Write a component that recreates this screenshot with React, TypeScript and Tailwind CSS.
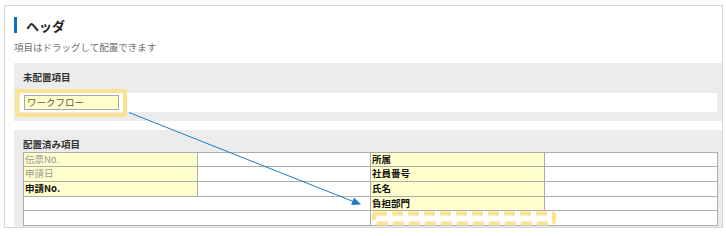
import React from 'react';

const font = { fontFamily: '"Noto Sans CJK JP", "Noto Sans", sans-serif' };

type Cell = {
  text?: string;
  span?: number;
  yellow?: boolean;
  muted?: boolean;
};

const rows: Cell[][] = [
  [
    { text: '伝票No.', yellow: true, muted: true },
    {},
    { text: '所属', yellow: true },
    {},
  ],
  [
    { text: '申請日', yellow: true, muted: true },
    {},
    { text: '社員番号', yellow: true },
    {},
  ],
  [
    { text: '申請No.', yellow: true },
    {},
    { text: '氏名', yellow: true },
    {},
  ],
  [{ span: 2 }, { text: '負担部門', yellow: true }, {}],
  [{ span: 2 }, { span: 2 }],
];

const LayoutTable = () => (
  <div className="ml-[9px] grid w-[695px] grid-cols-[174px_173px_174px_173px] grid-rows-[14px_15px_15px_14px_15px] border-l border-t border-[#adadad]">
    {rows.map((row, r) =>
      row.map((cell, c) => (
        <div
          key={`${r}-${c}`}
          className={`flex items-center border-b border-r border-[#adadad] pl-px text-[9.5px] leading-none ${
            cell.span === 2 ? 'col-span-2' : ''
          } ${cell.yellow ? 'bg-[#ffffcc]' : 'bg-white'} ${
            cell.muted ? 'text-[#9a9a9a]' : 'font-bold text-[#111]'
          }`}
        >
          {cell.text}
        </div>
      )),
    )}
  </div>
);

const App = () => {
  return (
    <div className="relative h-[236px] w-[726px] bg-white" style={font}>
      <div className="pl-[4px] pt-[5px]">
        <div className="h-[223px] w-[719px] overflow-hidden border border-[#d6d6d6] bg-white pl-[9px]">
          <div className="mt-[11px] flex h-[16px] items-center">
            <div className="h-[16px] w-[3px] bg-[#0b72c2]" />
            <span className="ml-[9px] text-[13px] font-bold leading-none text-[#222]">
              ヘッダ
            </span>
          </div>
          <p className="mt-[8px] h-[12px] text-[9.5px] leading-[12px] text-[#6f6f6f]">
            項目はドラッグして配置できます
          </p>

          <div className="mt-[10px] bg-[#ececec] pb-[9px] pl-[6px] pr-[5px] pt-[8px]">
            <p className="ml-[3px] h-[12px] text-[9.5px] font-bold leading-[12px] text-[#333]">
              未配置項目
            </p>
            <div className="relative mt-[10px] flex h-[19px] items-center bg-white pl-[4px]">
              <div className="absolute left-[-5px] top-[-4px] h-[28px] w-[112px] rounded-[3px] border-4 border-[#fde290]" />
              <div className="relative flex h-[15px] w-[95px] items-center border border-[#a8a8a8] bg-[#ffffcc] pl-[2px] text-[9.5px] leading-none text-[#555]">
                ワークフロー
              </div>
            </div>
          </div>

          <div className="mt-[9px] bg-[#ececec] pb-[2px] pt-[8px]">
            <p className="ml-[9px] h-[12px] text-[9.5px] font-bold leading-[12px] text-[#333]">
              配置済み項目
            </p>
            <div className="mt-[2px]">
              <LayoutTable />
            </div>
          </div>
        </div>
      </div>

      <svg
        className="pointer-events-none absolute left-0 top-0"
        width="726"
        height="236"
        viewBox="0 0 726 236"
      >
        <line x1="129" y1="112.5" x2="354" y2="201.8" stroke="#1b7cc6" strokeWidth="1" />
        <polygon points="361,204.5 354.1,197.5 351.1,204.9" fill="#1b7cc6" />
        <rect
          x="374"
          y="213.5"
          width="180"
          height="10"
          rx="2"
          fill="none"
          stroke="#fde290"
          strokeWidth="4"
          strokeDasharray="11 5"
        />
      </svg>
    </div>
  );
};

export default App;
